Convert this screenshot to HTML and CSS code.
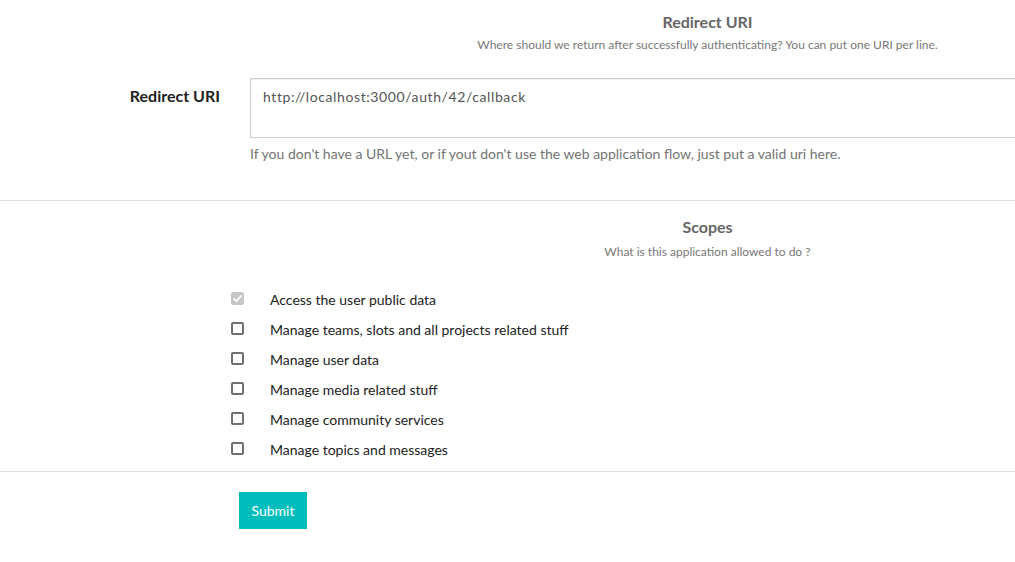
FILE: index.html
```html
<!DOCTYPE html>
<html>
<head>
<meta charset="utf-8">
<link rel="stylesheet" href="styles.css">
</head>
<body>
<div class="page">
  <section class="block">
    <div class="block-head">
      <h2 class="block-title">Redirect URI</h2>
      <p class="block-sub">Where should we return after successfully authenticating? You can put one URI per line.</p>
    </div>
    <div class="form-row">
      <label class="row-label" for="uri">Redirect URI</label>
      <div class="row-field">
        <textarea id="uri" class="uri-input">http://localhost:3000/auth/42/callback</textarea>
        <p class="help">If you don't have a URL yet, or if yout don't use the web application flow, just put a valid uri here.</p>
      </div>
    </div>
  </section>
  <hr class="sep">
  <section class="block scopes">
    <div class="block-head">
      <h2 class="block-title">Scopes</h2>
      <p class="block-sub">What is this application allowed to do ?</p>
    </div>
    <ul class="scope-list">
      <li class="scope"><span class="cb cb-disabled"><svg viewBox="0 0 13 13" width="13" height="13"><path d="M3 6.8 L5.4 9.1 L10 4.2" fill="none" stroke="#fff" stroke-width="1.8" stroke-linecap="round" stroke-linejoin="round"/></svg></span><span class="scope-text">Access the user public data</span></li>
      <li class="scope"><span class="cb"></span><span class="scope-text">Manage teams, slots and all projects related stuff</span></li>
      <li class="scope"><span class="cb"></span><span class="scope-text">Manage user data</span></li>
      <li class="scope"><span class="cb"></span><span class="scope-text">Manage media related stuff</span></li>
      <li class="scope"><span class="cb"></span><span class="scope-text">Manage community services</span></li>
      <li class="scope"><span class="cb"></span><span class="scope-text">Manage topics and messages</span></li>
    </ul>
  </section>
  <hr class="sep">
  <div class="actions">
    <button class="submit" type="button">Submit</button>
  </div>
</div>
</body>
</html>
```
FILE: styles.css
```css
html, body {
  margin: 0;
  padding: 0;
  background: #fff;
  overflow: hidden;
}
body {
  font-family: "Lato", "Open Sans", sans-serif;
  color: #333;
  width: 1015px;
  height: 562px;
}
.page {
  display: flex;
  flex-direction: column;
}
.block-head {
  margin-left: 400px;
  text-align: center;
}
.block-title {
  margin: 0;
  font-size: 16px;
  line-height: 20px;
  font-weight: 700;
  color: #666;
}
.block-sub {
  margin: 0;
  font-size: 12px;
  line-height: 16px;
  color: #777;
}
.block:first-child .block-head {
  padding-top: 12px;
}
.block:first-child .block-sub {
  margin-top: 5px;
}
.form-row {
  display: grid;
  grid-template-columns: 220px 1fr;
  column-gap: 30px;
  margin-top: 25px;
}
.row-label {
  text-align: right;
  font-size: 16px;
  font-weight: 700;
  color: #222;
  padding-top: 9px;
  line-height: 18px;
}
.row-field {
  min-width: 0;
}
.uri-input {
  display: block;
  box-sizing: border-box;
  width: 100%;
  height: 60px;
  border: 1px solid #ccc;
  border-right: 0;
  border-radius: 0;
  padding: 9px 12px;
  font-family: inherit;
  font-size: 14px;
  letter-spacing: 0.6px;
  line-height: 18px;
  color: #555;
  resize: none;
  box-shadow: inset 0 1px 1px rgba(0,0,0,0.06);
  outline: none;
}
.help {
  margin: 7px 0 0;
  font-size: 14px;
  line-height: 18px;
  color: #737373;
}
.sep {
  border: 0;
  border-top: 1px solid #ddd;
  margin: 0;
}
.block:first-child {
  padding-bottom: 37px;
}
.scopes .block-head {
  padding-top: 16px;
}
.scopes .block-sub {
  margin-top: 7px;
}
.scope-list {
  list-style: none;
  margin: 24px 0 0;
  padding: 0 0 7px 231px;
}
.scope {
  display: flex;
  align-items: center;
  height: 30px;
  font-size: 14px;
  color: #222;
}
.cb {
  box-sizing: border-box;
  width: 13px;
  height: 13px;
  border: 2px solid #707070;
  border-radius: 2px;
  flex: none;
  margin-right: 26px;
  margin-top: -2px;
}
.cb-disabled {
  border: 0;
  background: #c6c6c6;
}
.cb-disabled svg {
  display: block;
}
.actions {
  padding: 20px 0 0 239px;
}
.submit {
  width: 68px;
  height: 37px;
  border: 0;
  border-radius: 0;
  background: #00bdbc;
  color: #fff;
  font-family: inherit;
  font-size: 14px;
  padding: 0;
}
```
